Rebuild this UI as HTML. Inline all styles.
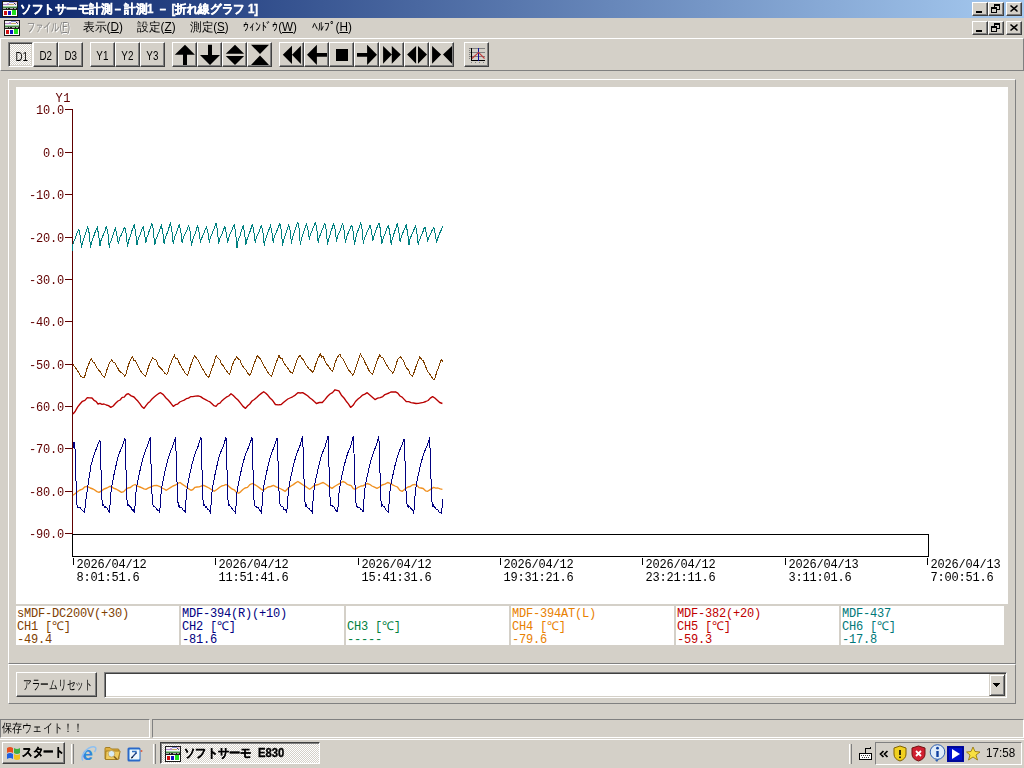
<!DOCTYPE html>
<html><head><meta charset="utf-8">
<style>
*{box-sizing:border-box;margin:0;padding:0}
html,body{width:1024px;height:768px;overflow:hidden;background:#D4D0C8;font-family:"Liberation Sans",sans-serif;font-size:12px;color:#000}
.a{position:absolute}
.btn{position:absolute;background:#D4D0C8;border-top:1px solid #fff;border-left:1px solid #fff;border-right:1px solid #404040;border-bottom:1px solid #404040;box-shadow:inset -1px -1px 0 #808080}
.wbtn{position:absolute;width:16px;height:14px;background:#D4D0C8;border-top:1px solid #fff;border-left:1px solid #fff;border-right:1px solid #404040;border-bottom:1px solid #404040;box-shadow:inset -1px -1px 0 #808080}
.tb{position:absolute;top:42px;width:25px;height:25px;background:#D4D0C8;border-top:1px solid #fff;border-left:1px solid #fff;border-right:1px solid #404040;border-bottom:1px solid #404040;box-shadow:inset -1px -1px 0 #808080;font-size:12px;text-align:center;line-height:22px}
.tt{display:inline-block;transform:scale(0.82,1.1);margin-top:1.5px}
.tb svg{position:absolute;left:0;top:0}
.menu{position:absolute;top:19px;height:17px;line-height:17px;font-size:12px;white-space:nowrap}
.sx{display:inline-block;transform-origin:0 50%;white-space:pre}
.mono{font-family:"Liberation Mono",monospace}
.ylab{position:absolute;transform:scaleY(1.12);font-family:"Liberation Mono",monospace;font-size:12px;color:#600000;line-height:10px;letter-spacing:-0.2px;text-align:right;width:60px}
.xlab{position:absolute;transform:scaleY(1.1);transform-origin:0 0;font-family:"Liberation Mono",monospace;font-size:12px;color:#000;line-height:12.3px;letter-spacing:-0.2px;white-space:pre}
.cell{position:absolute;top:606px;width:163px;height:39px;background:#fff;font-family:"Liberation Mono",monospace;font-size:12px;line-height:13px;padding:2px 0 0 1px;white-space:pre;letter-spacing:-0.2px}
</style></head><body>
<!-- title bar -->
<div class="a" style="left:0;top:0;width:1024px;height:18px;background:linear-gradient(to right,#0A246A,#A6CAF0)"></div>
<svg class="a" style="left:2px;top:1px" width="16" height="16" viewBox="0 0 16 16" shape-rendering="crispEdges">
<rect x="0" y="0" width="16" height="16" fill="#1a1a1a"/>
<rect x="1" y="1" width="14" height="6" fill="#f4f2f8"/>
<rect x="7" y="1" width="5" height="1" fill="#8088d0"/><rect x="12" y="1" width="3" height="2" fill="#e8c8d8"/>
<rect x="5" y="2" width="2" height="1" fill="#c0a0e0"/><rect x="12" y="2" width="1" height="1" fill="#402060"/>
<rect x="1" y="3" width="6" height="1" fill="#b088c8"/><rect x="7" y="3" width="5" height="1" fill="#c8a868"/><rect x="13" y="3" width="1" height="1" fill="#406080"/>
<rect x="1" y="5" width="14" height="1" fill="#a0d0a0"/><rect x="1" y="6" width="14" height="1" fill="#4a8a4a"/>
<path d="M1 7h3v1H1zM5 7h1v1H5zM8 7h3v1H8zM12 7h2v1h-2z" fill="#a8a8a8"/>
<rect x="1" y="9" width="14" height="6" fill="#fff"/>
<rect x="2" y="10" width="3" height="4" fill="#d01010"/>
<rect x="6" y="10" width="3" height="4" fill="#1010c0"/>
<rect x="10" y="9" width="4" height="5" fill="#20e020"/>
</svg>
<div class="a" style="left:20px;top:1px;height:16px;line-height:16px;color:#fff;font-weight:bold;font-size:12px;white-space:nowrap;-webkit-text-stroke:0.35px #fff"><span class="sx" style="transform:scaleX(0.963)">ソフトサーモ計測－計測1 － [折れ線グラフ 1]</span></div>
<div class="wbtn" style="left:972px;top:2px"><svg class="a" width="14" height="12" style="left:0;top:0"><rect x="3" y="8" width="6" height="2" fill="#000"/></svg></div>
<div class="wbtn" style="left:988px;top:2px"><svg class="a" width="14" height="12" style="left:0;top:0" shape-rendering="crispEdges"><path d="M5 1h6v2H5zM10 3h1v4H10zM8 6h3v1H8zM5 3h1v1H5zM2 4h6v2H2zM2 6h1v4H2zM7 6h1v4H7zM2 9h6v1H2z" fill="#000"/></svg></div>
<div class="wbtn" style="left:1006px;top:2px"><svg class="a" width="14" height="12" style="left:0;top:0"><path d="M3.5 2.5l7 6M10.5 2.5l-7 6" stroke="#000" stroke-width="1.6"/></svg></div>
<!-- menu bar -->
<svg class="a" style="left:4px;top:20px" width="16" height="16" viewBox="0 0 16 16" shape-rendering="crispEdges">
<rect x="0" y="0" width="16" height="16" fill="#1a1a1a"/>
<rect x="1" y="1" width="14" height="6" fill="#f4f2f8"/>
<rect x="7" y="1" width="5" height="1" fill="#8088d0"/><rect x="12" y="1" width="3" height="2" fill="#e8c8d8"/>
<rect x="5" y="2" width="2" height="1" fill="#c0a0e0"/><rect x="12" y="2" width="1" height="1" fill="#402060"/>
<rect x="1" y="3" width="6" height="1" fill="#b088c8"/><rect x="7" y="3" width="5" height="1" fill="#c8a868"/><rect x="13" y="3" width="1" height="1" fill="#406080"/>
<rect x="1" y="5" width="14" height="1" fill="#a0d0a0"/><rect x="1" y="6" width="14" height="1" fill="#4a8a4a"/>
<path d="M1 7h3v1H1zM5 7h1v1H5zM8 7h3v1H8zM12 7h2v1h-2z" fill="#a8a8a8"/>
<rect x="1" y="9" width="14" height="6" fill="#fff"/>
<rect x="2" y="10" width="3" height="4" fill="#d01010"/>
<rect x="6" y="10" width="3" height="4" fill="#1010c0"/>
<rect x="10" y="9" width="4" height="5" fill="#20e020"/>
</svg>
<div class="menu" style="left:27px;color:#808080;text-shadow:1px 1px 0 #fff"><span class="sx" style="transform:scaleX(0.68)">ファイル(<u>F</u>)</span></div>
<div class="menu" style="left:83px"><span class="sx" style="transform:scaleX(0.98)">表示(<u>D</u>)</span></div>
<div class="menu" style="left:137px"><span class="sx" style="transform:scaleX(0.98)">設定(<u>Z</u>)</span></div>
<div class="menu" style="left:190px"><span class="sx" style="transform:scaleX(0.965)">測定(<u>S</u>)</span></div>
<div class="menu" style="left:243px"><span class="sx" style="transform:scaleX(0.976)">ｳｨﾝﾄﾞｳ(<u>W</u>)</span></div>
<div class="menu" style="left:312px"><span class="sx" style="transform:scaleX(0.98)">ﾍﾙﾌﾟ(<u>H</u>)</span></div>
<div class="wbtn" style="left:972px;top:21px"><svg class="a" width="14" height="12" style="left:0;top:0"><rect x="3" y="8" width="6" height="2" fill="#000"/></svg></div>
<div class="wbtn" style="left:988px;top:21px"><svg class="a" width="14" height="12" style="left:0;top:0" shape-rendering="crispEdges"><path d="M5 1h6v2H5zM10 3h1v4H10zM8 6h3v1H8zM5 3h1v1H5zM2 4h6v2H2zM2 6h1v4H2zM7 6h1v4H7zM2 9h6v1H2z" fill="#000"/></svg></div>
<div class="wbtn" style="left:1006px;top:21px"><svg class="a" width="14" height="12" style="left:0;top:0"><path d="M3.5 2.5l7 6M10.5 2.5l-7 6" stroke="#000" stroke-width="1.6"/></svg></div>
<!-- toolbar -->
<div class="a" style="left:0;top:38px;width:1024px;height:33px;border-top:1px solid #fff;border-left:1px solid #fff;border-right:1px solid #808080;border-bottom:1px solid #808080"></div>
<div class="tb" style="left:8px;border-top-color:#808080;border-left-color:#808080;border-right-color:#fff;border-bottom-color:#fff;box-shadow:inset 1px 1px 0 #404040,inset -1px -1px 0 #D4D0C8;background-color:#fff;background-image:linear-gradient(45deg,#D4D0C8 25%,transparent 25%,transparent 75%,#D4D0C8 75%),linear-gradient(45deg,#D4D0C8 25%,transparent 25%,transparent 75%,#D4D0C8 75%);background-size:2px 2px;background-position:0 0,1px 1px;padding:1px 0 0 3px"><span class="tt">D1</span></div>
<div class="tb" style="left:33px"><span class="tt">D2</span></div>
<div class="tb" style="left:58px"><span class="tt">D3</span></div>
<div class="tb" style="left:90px"><span class="tt">Y1</span></div>
<div class="tb" style="left:115px"><span class="tt">Y2</span></div>
<div class="tb" style="left:140px"><span class="tt">Y3</span></div>
<div class="tb" style="left:172px"><svg style="position:absolute;left:-1px;top:-1px" width="25" height="25" viewBox="0 0 25 25"><path d="M13 2.8L22.9 12.7H15V22.9H11V12.7H2.8Z" fill="#000"/></svg></div>
<div class="tb" style="left:197px"><svg style="position:absolute;left:-1px;top:-1px" width="25" height="25" viewBox="0 0 25 25"><path d="M11 2.8H15V13H23L13 22.9L3 13H11Z" fill="#000"/></svg></div>
<div class="tb" style="left:222px"><svg style="position:absolute;left:-1px;top:-1px" width="25" height="25" viewBox="0 0 25 25"><path d="M13 2.8L22.1 11.7H3.8Z M3.8 14H22.1L13 22.9Z" fill="#000"/></svg></div>
<div class="tb" style="left:247px"><svg style="position:absolute;left:-1px;top:-1px" width="25" height="25" viewBox="0 0 25 25"><path d="M4 2.8H22L13 12Z M13 13.5L22 23H4Z" fill="#000"/></svg></div>
<div class="tb" style="left:279px"><svg style="position:absolute;left:-1px;top:-1px" width="25" height="25" viewBox="0 0 25 25"><path d="M3.8 12.7L13 3.8V21.9Z M13 12.7L21.9 3.8V21.9Z" fill="#000"/></svg></div>
<div class="tb" style="left:304px"><svg style="position:absolute;left:-1px;top:-1px" width="25" height="25" viewBox="0 0 25 25"><path d="M3 12.7L12.9 2.8V11H23V14.8H12.9V22.9Z" fill="#000"/></svg></div>
<div class="tb" style="left:329px"><svg style="position:absolute;left:-1px;top:-1px" width="25" height="25" viewBox="0 0 25 25"><rect x="7" y="7" width="12" height="12" fill="#000"/></svg></div>
<div class="tb" style="left:354px"><svg style="position:absolute;left:-1px;top:-1px" width="25" height="25" viewBox="0 0 25 25"><path d="M23 12.7L13.1 2.8V11H3V14.8H13.1V22.9Z" fill="#000"/></svg></div>
<div class="tb" style="left:379px"><svg style="position:absolute;left:-1px;top:-1px" width="25" height="25" viewBox="0 0 25 25"><path d="M4.1 3.9L12.8 12.6L4.1 21.8Z M12.8 3.9L21.8 12.6L12.8 21.8Z" fill="#000"/></svg></div>
<div class="tb" style="left:404px"><svg style="position:absolute;left:-1px;top:-1px" width="25" height="25" viewBox="0 0 25 25"><path d="M3.1 12.6L12.1 3.9V21.8Z M14 3.9L23 12.6L14 21.8Z" fill="#000"/></svg></div>
<div class="tb" style="left:429px"><svg style="position:absolute;left:-1px;top:-1px" width="25" height="25" viewBox="0 0 25 25"><path d="M3.1 3.9L12.1 12.6L3.1 21.8Z M23 3.9V21.8L14 12.6Z" fill="#000"/></svg></div>
<div class="tb" style="left:464px"><svg style="position:absolute;left:-1px;top:-1px" width="25" height="25" viewBox="0 0 25 25"><g shape-rendering="crispEdges"><path d="M5 6.5H21M5 10.5H21M5 14.5H21" stroke="#808080"/>
<path d="M5 8.5h1M5 12.5h1M5 16.5h1M7.5 20v1M11.5 20v1M15.5 20v1M19.5 20v1" stroke="#808080"/>
<path d="M7.5 6V19M7 18.5H21" stroke="#000"/><path d="M14.5 6V19" stroke="#1010a0" stroke-width="1.2"/></g>
<path d="M8 16.5L14.6 10.4L20.5 16.5" stroke="#c03838" fill="none" stroke-width="1.1"/></svg></div>
<!-- chart panel -->
<div class="a" style="left:8px;top:79px;width:1008px;height:585px;border-top:1px solid #fff;border-left:1px solid #fff;border-right:1px solid #808080;border-bottom:1px solid #808080"></div>
<div class="a" style="left:16px;top:87px;width:992px;height:517px;background:#fff"></div>
<div class="cell" style="left:16px;color:#804000">sMDF-DC200V(+30)
CH1 [℃]
-49.4</div>
<div class="cell" style="left:181px;color:#000080">MDF-394(R)(+10)
CH2 [℃]
-81.6</div>
<div class="cell" style="left:346px;color:#008040">
CH3 [℃]
-----</div>
<div class="cell" style="left:511px;color:#E88000">MDF-394AT(L)
CH4 [℃]
-79.6</div>
<div class="cell" style="left:676px;color:#C00000">MDF-382(+20)
CH5 [℃]
-59.3</div>
<div class="cell" style="left:841px;color:#007878">MDF-437
CH6 [℃]
-17.8</div>
<div class="ylab" style="left:4px;top:106.0px">10.0</div>
<div class="ylab" style="left:4px;top:149.0px">0.0</div>
<div class="ylab" style="left:4px;top:191.0px">-10.0</div>
<div class="ylab" style="left:4px;top:234.0px">-20.0</div>
<div class="ylab" style="left:4px;top:276.0px">-30.0</div>
<div class="ylab" style="left:4px;top:318.0px">-40.0</div>
<div class="ylab" style="left:4px;top:361.0px">-50.0</div>
<div class="ylab" style="left:4px;top:403.0px">-60.0</div>
<div class="ylab" style="left:4px;top:445.0px">-70.0</div>
<div class="ylab" style="left:4px;top:488.0px">-80.0</div>
<div class="ylab" style="left:4px;top:530.0px">-90.0</div>
<div class="ylab" style="left:10px;top:94px;width:61px;text-align:right;letter-spacing:0.5px">Y1</div>
<div class="xlab" style="left:76.5px;top:558px">2026/04/12
8:01:51.6</div>
<div class="xlab" style="left:218.5px;top:558px">2026/04/12
11:51:41.6</div>
<div class="xlab" style="left:361.5px;top:558px">2026/04/12
15:41:31.6</div>
<div class="xlab" style="left:503.5px;top:558px">2026/04/12
19:31:21.6</div>
<div class="xlab" style="left:645.5px;top:558px">2026/04/12
23:21:11.6</div>
<div class="xlab" style="left:788.5px;top:558px">2026/04/13
3:11:01.6</div>
<div class="xlab" style="left:930.5px;top:558px">2026/04/13
7:00:51.6</div>
<svg class="a" style="left:0;top:0" width="1024" height="768" viewBox="0 0 1024 768">
<g shape-rendering="crispEdges">
<path d="M72.5 109V534" stroke="#600000"/>
<path d="M65 109.5H72" stroke="#600000"/>
<path d="M65 152.5H72" stroke="#600000"/>
<path d="M65 194.5H72" stroke="#600000"/>
<path d="M65 237.5H72" stroke="#600000"/>
<path d="M65 279.5H72" stroke="#600000"/>
<path d="M65 321.5H72" stroke="#600000"/>
<path d="M65 364.5H72" stroke="#600000"/>
<path d="M65 406.5H72" stroke="#600000"/>
<path d="M65 448.5H72" stroke="#600000"/>
<path d="M65 491.5H72" stroke="#600000"/>
<path d="M65 533.5H72" stroke="#600000"/>
<rect x="72.5" y="534.5" width="856" height="22" fill="none" stroke="#000"/>
<path d="M73.5 557.5V565" stroke="#000"/>
<path d="M215.5 557.5V565" stroke="#000"/>
<path d="M358.5 557.5V565" stroke="#000"/>
<path d="M500.5 557.5V565" stroke="#000"/>
<path d="M642.5 557.5V565" stroke="#000"/>
<path d="M785.5 557.5V565" stroke="#000"/>
<path d="M927.5 557.5V565" stroke="#000"/>
</g>
<path d="M72.5,251.0 L73.0,244.0 L74.5,240.0 L76.0,236.0 L77.5,232.0 L78.9,229.7 L79.7,233.7 L80.2,235.7 L81.3,245.0 L81.7,248.0 L82.3,243.1 L83.5,239.1 L84.8,235.9 L86.0,231.7 L87.2,228.4 L87.8,226.9 L88.6,230.9 L89.1,232.9 L90.2,244.5 L90.6,247.5 L91.3,242.9 L92.6,238.9 L93.9,235.9 L95.2,231.9 L96.5,228.7 L97.2,227.4 L98.0,231.4 L98.5,233.4 L99.6,243.1 L100.0,246.1 L100.7,241.4 L102.0,237.9 L103.3,234.9 L104.6,232.1 L105.9,227.8 L106.6,226.9 L107.4,230.9 L107.9,232.9 L109.0,245.0 L109.4,248.0 L110.0,243.3 L111.2,240.3 L112.4,237.1 L113.7,233.3 L114.9,229.6 L115.5,228.3 L116.3,232.3 L116.8,234.3 L117.9,240.8 L118.3,243.8 L119.0,240.8 L120.2,236.7 L121.5,234.7 L122.8,231.2 L124.1,228.1 L124.8,227.4 L125.6,231.4 L126.1,233.4 L127.2,244.0 L127.6,247.0 L128.3,241.6 L129.6,237.8 L130.9,234.4 L132.2,229.8 L133.5,226.3 L134.2,224.6 L135.0,228.6 L135.5,230.6 L136.6,242.2 L137.0,245.2 L137.6,241.3 L138.8,237.7 L140.1,234.6 L141.3,231.0 L142.5,227.7 L143.1,226.9 L143.9,230.9 L144.4,232.9 L145.5,240.3 L145.9,243.3 L146.5,238.6 L147.7,235.6 L148.9,231.8 L150.2,228.3 L151.4,225.1 L152.0,223.6 L152.8,227.6 L153.3,229.6 L154.4,242.2 L154.8,245.2 L155.5,240.8 L156.8,237.1 L158.1,234.1 L159.4,230.7 L160.7,226.6 L161.4,225.5 L162.2,229.5 L162.7,231.5 L163.8,241.0 L164.2,244.0 L164.8,239.6 L166.1,235.8 L167.4,232.5 L168.6,228.8 L169.9,224.6 L170.5,223.4 L171.3,227.4 L171.8,229.4 L172.9,241.0 L173.3,244.0 L173.9,240.4 L175.1,235.9 L176.4,232.8 L177.6,229.9 L178.8,225.7 L179.4,224.8 L180.2,228.8 L180.7,230.8 L181.8,240.0 L182.2,243.0 L182.9,239.2 L184.2,235.5 L185.5,233.2 L186.8,230.3 L188.1,227.0 L188.8,225.7 L189.6,229.7 L190.1,231.7 L191.2,243.3 L191.6,246.3 L192.2,242.2 L193.4,237.8 L194.7,234.6 L195.9,231.0 L197.1,227.2 L197.7,225.7 L198.5,229.7 L199.0,231.7 L200.1,240.0 L200.5,243.0 L201.1,239.4 L202.3,236.9 L203.6,234.1 L204.8,230.7 L206.0,228.0 L206.6,226.7 L207.4,230.7 L207.9,232.7 L209.0,240.0 L209.4,243.0 L210.1,238.2 L211.4,235.4 L212.7,231.8 L214.0,228.9 L215.3,225.2 L216.0,223.4 L216.8,227.4 L217.3,229.4 L218.4,241.0 L218.8,244.0 L219.4,239.9 L220.6,236.9 L221.9,234.2 L223.1,230.5 L224.3,227.9 L224.9,226.7 L225.7,230.7 L226.2,232.7 L227.3,240.0 L227.7,243.0 L228.4,238.6 L229.7,235.3 L230.9,231.9 L232.2,229.7 L233.5,225.6 L234.2,224.8 L235.0,228.8 L235.5,230.8 L236.6,244.7 L237.0,247.7 L237.6,242.6 L238.8,238.8 L240.1,235.4 L241.3,230.7 L242.5,227.2 L243.1,225.7 L243.9,229.7 L244.4,231.7 L245.5,241.9 L245.9,244.9 L246.6,240.5 L247.9,237.3 L249.2,233.6 L250.5,230.3 L251.8,225.9 L252.5,224.8 L253.3,228.8 L253.8,230.8 L254.9,240.0 L255.3,243.0 L255.9,239.0 L257.2,235.8 L258.5,233.3 L259.7,230.4 L261.0,226.3 L261.6,225.5 L262.4,229.5 L262.9,231.5 L264.0,242.6 L264.4,245.6 L265.0,240.8 L266.2,237.2 L267.5,233.6 L268.7,230.5 L269.9,227.0 L270.5,225.5 L271.3,229.5 L271.8,231.5 L272.9,239.8 L273.3,242.8 L274.0,238.3 L275.3,234.5 L276.6,231.6 L277.9,228.2 L279.2,225.0 L279.9,223.6 L280.7,227.6 L281.2,229.6 L282.3,242.6 L282.7,245.6 L283.3,241.5 L284.5,237.4 L285.8,233.4 L287.0,229.9 L288.2,226.2 L288.8,224.5 L289.6,228.5 L290.1,230.5 L291.2,240.7 L291.6,243.7 L292.2,238.3 L293.4,235.4 L294.6,231.3 L295.9,227.6 L297.1,223.6 L297.7,221.7 L298.5,225.7 L299.0,227.7 L300.1,241.7 L300.5,244.7 L301.1,239.9 L302.3,236.1 L303.6,232.0 L304.8,229.0 L306.0,224.6 L306.6,223.6 L307.4,227.6 L307.9,229.6 L309.0,237.0 L309.4,240.0 L310.0,235.7 L311.2,232.7 L312.5,229.6 L313.7,226.8 L314.9,223.4 L315.5,222.7 L316.3,226.7 L316.8,228.7 L317.9,239.8 L318.3,242.8 L319.0,238.0 L320.3,234.7 L321.6,231.2 L322.9,228.2 L324.2,224.4 L324.9,223.6 L325.7,227.6 L326.2,229.6 L327.3,241.7 L327.7,244.7 L328.3,240.5 L329.5,236.4 L330.8,232.0 L332.0,228.6 L333.2,224.9 L333.8,223.6 L334.6,227.6 L335.1,229.6 L336.2,238.9 L336.6,241.9 L337.2,237.7 L338.4,234.1 L339.6,231.7 L340.9,228.8 L342.1,224.8 L342.7,223.6 L343.5,227.6 L344.0,229.6 L345.1,239.8 L345.5,242.8 L346.1,238.9 L347.4,235.2 L348.6,232.0 L349.9,229.3 L351.2,226.0 L351.8,225.0 L352.6,229.0 L353.1,231.0 L354.2,241.7 L354.6,244.7 L355.2,240.3 L356.4,235.5 L357.6,231.4 L358.9,228.7 L360.1,224.3 L360.7,222.7 L361.5,226.7 L362.0,228.7 L363.1,240.7 L363.5,243.7 L364.2,239.2 L365.5,236.3 L366.8,232.3 L368.1,229.7 L369.4,226.9 L370.1,225.0 L370.9,229.0 L371.4,231.0 L372.5,237.9 L372.9,240.9 L373.5,237.3 L374.7,233.9 L376.0,230.1 L377.2,227.1 L378.4,223.6 L379.0,222.7 L379.8,226.7 L380.3,228.7 L381.4,240.7 L381.8,243.7 L382.5,240.0 L383.8,236.5 L385.1,233.5 L386.4,229.8 L387.7,226.4 L388.4,225.5 L389.2,229.5 L389.7,231.5 L390.8,241.7 L391.2,244.7 L391.8,240.4 L393.0,236.8 L394.2,232.9 L395.5,229.2 L396.7,225.5 L397.3,223.6 L398.1,227.6 L398.6,229.6 L399.7,238.9 L400.1,241.9 L400.7,238.6 L401.9,235.0 L403.1,232.4 L404.4,229.4 L405.6,226.1 L406.2,225.5 L407.0,229.5 L407.5,231.5 L408.6,241.7 L409.0,244.7 L409.6,239.9 L410.9,236.8 L412.2,233.3 L413.6,230.5 L414.9,227.4 L415.5,225.5 L416.3,229.5 L416.8,231.5 L417.9,241.7 L418.3,244.7 L419.0,240.7 L420.3,238.1 L421.6,235.0 L422.9,231.9 L424.2,228.0 L424.9,226.9 L425.7,230.9 L426.2,232.9 L427.3,238.9 L427.7,241.9 L428.3,238.4 L429.5,235.7 L430.8,233.1 L432.0,230.6 L433.2,228.5 L433.8,227.3 L434.6,231.3 L435.1,233.3 L436.2,239.8 L436.6,242.8 L437.2,239.7 L438.4,236.6 L439.6,233.3 L440.9,230.7 L442.1,227.9 L442.7,226.4" fill="none" stroke="#008080" stroke-width="1" shape-rendering="crispEdges"/>
<path d="M73.0,364.5 L75.0,367.0 L77.0,370.0 L79.0,373.0 L81.0,376.5 L83.7,378.0 L84.9,376.0 L86.7,369.3 L88.7,364.3 L91.2,358.5 L92.8,361.9 L94.5,362.7 L96.4,367.3 L98.4,369.6 L100.3,371.9 L102.3,375.7 L104.2,377.1 L105.4,375.1 L107.2,368.8 L109.2,363.6 L111.8,359.5 L113.3,362.7 L115.0,362.7 L117.0,366.8 L118.9,370.2 L120.8,372.3 L122.8,373.9 L124.7,376.1 L125.9,374.1 L127.7,367.5 L129.7,361.5 L132.3,356.6 L133.8,360.2 L135.5,361.0 L137.5,364.8 L139.4,368.8 L141.3,372.0 L143.3,374.4 L145.2,376.1 L146.4,374.1 L148.2,367.9 L150.2,362.2 L152.8,357.6 L154.5,359.5 L156.3,360.1 L158.4,365.8 L160.4,367.8 L162.5,370.1 L164.6,373.2 L166.7,374.2 L167.9,372.2 L169.7,366.1 L171.7,360.8 L174.3,355.2 L175.8,358.7 L177.5,358.7 L179.5,363.8 L181.4,366.9 L183.3,369.8 L185.3,373.3 L187.2,375.2 L188.4,373.2 L190.2,366.8 L192.2,361.1 L194.8,355.6 L196.5,358.2 L198.3,360.6 L200.3,365.0 L202.4,368.4 L204.5,371.9 L206.6,375.6 L208.7,377.1 L209.8,375.1 L211.7,369.0 L213.7,363.8 L216.2,355.2 L217.8,358.1 L219.5,359.1 L221.4,363.8 L223.4,365.8 L225.3,369.4 L227.3,371.8 L229.2,374.2 L230.4,372.2 L232.2,365.4 L234.2,360.7 L236.8,356.6 L238.4,358.9 L240.1,360.3 L242.0,365.3 L244.0,367.9 L246.0,370.3 L247.9,373.4 L249.9,375.2 L251.1,373.2 L252.9,367.3 L254.9,361.7 L257.5,355.4 L259.2,357.9 L260.9,359.6 L263.0,364.3 L265.1,367.5 L267.2,371.4 L269.2,374.0 L271.3,376.1 L272.5,374.1 L274.3,368.2 L276.3,362.5 L278.9,355.2 L280.5,358.6 L282.2,358.7 L284.2,363.5 L286.2,366.0 L288.2,368.7 L290.2,371.7 L292.2,373.2 L293.4,371.2 L295.2,365.1 L297.2,359.3 L299.8,355.2 L301.3,357.7 L303.0,359.3 L305.0,363.2 L306.9,366.0 L308.8,368.7 L310.8,370.1 L312.7,372.2 L313.9,370.2 L315.7,364.3 L317.7,358.9 L320.3,354.0 L321.7,357.1 L323.3,356.9 L325.1,361.2 L326.8,364.3 L328.6,366.3 L330.4,369.1 L332.2,371.2 L333.4,369.2 L335.2,362.6 L337.2,357.5 L339.8,354.0 L341.4,357.6 L343.1,358.9 L345.0,363.0 L346.9,367.1 L348.9,370.2 L350.8,372.5 L352.8,375.2 L354.0,373.2 L355.8,367.8 L357.8,361.9 L360.4,354.0 L361.8,356.6 L363.4,358.8 L365.2,362.9 L366.9,366.1 L368.7,369.9 L370.5,372.7 L372.3,374.2 L373.5,372.2 L375.3,365.7 L377.3,360.1 L379.9,354.6 L381.4,357.4 L383.1,358.1 L385.1,362.5 L387.0,365.5 L388.9,368.9 L390.9,370.6 L392.8,373.2 L394.0,371.2 L395.8,365.3 L397.8,359.1 L400.4,356.6 L401.8,358.8 L403.4,360.2 L405.2,365.6 L406.9,368.3 L408.7,370.5 L410.5,374.9 L412.3,376.1 L413.5,374.1 L415.3,368.6 L417.3,362.9 L419.9,356.6 L421.6,359.5 L423.4,360.9 L425.5,366.4 L427.5,371.1 L429.6,373.8 L431.7,377.1 L433.8,380.0 L435.0,378.0 L436.8,371.9 L438.8,366.7 L441.4,359.5 L442.0,360.5 L443.0,361.5" fill="none" stroke="#804000" stroke-width="1" shape-rendering="crispEdges"/>
<path d="M73.0,414.0 L75.3,411.2 L77.7,406.9 L80.0,404.0 L82.4,401.3 L84.9,400.4 L87.3,397.6 L89.7,397.9 L92.0,398.0 L94.0,400.3 L96.0,401.3 L98.0,404.0 L100.0,403.3 L102.0,404.3 L104.0,404.0 L106.3,405.0 L108.5,405.6 L110.8,407.4 L113.2,406.0 L115.6,403.3 L118.0,401.0 L120.1,400.0 L122.2,397.4 L124.2,397.2 L126.3,394.5 L128.4,393.7 L131.2,395.9 L134.0,397.0 L136.0,399.2 L138.0,401.3 L140.0,403.9 L142.0,406.8 L144.0,408.4 L146.0,405.7 L148.0,403.1 L150.0,401.4 L152.0,399.0 L154.2,397.0 L156.3,395.2 L158.4,393.7 L160.6,392.7 L163.3,394.6 L166.0,398.0 L168.4,400.3 L170.9,403.3 L173.3,406.4 L175.5,404.7 L177.7,404.1 L179.8,402.0 L182.0,401.0 L184.2,400.1 L186.3,398.7 L188.5,398.1 L190.6,396.7 L192.8,396.6 L195.4,396.2 L198.0,395.8 L200.6,396.6 L203.1,398.4 L205.5,399.6 L208.0,401.0 L210.0,401.9 L212.0,403.7 L214.0,405.7 L216.0,406.4 L218.0,403.9 L220.0,403.2 L222.0,400.7 L224.0,399.0 L226.3,397.2 L228.7,396.0 L231.0,393.7 L233.3,395.6 L235.7,397.9 L238.0,400.0 L240.5,403.1 L243.0,406.4 L245.5,408.4 L247.7,405.7 L249.8,404.0 L252.0,401.0 L254.3,399.5 L256.7,397.5 L259.0,395.3 L261.4,393.4 L263.7,391.8 L265.8,393.2 L267.9,395.3 L270.0,398.0 L272.7,400.6 L275.4,404.5 L278.3,404.9 L281.2,404.5 L283.4,402.5 L285.6,400.7 L287.8,399.0 L290.0,398.0 L292.6,396.8 L295.3,395.1 L297.9,392.7 L300.3,393.0 L302.7,392.7 L305.1,394.1 L307.6,395.8 L310.0,398.0 L312.1,399.5 L314.3,401.6 L316.4,403.5 L319.4,402.5 L322.3,402.5 L324.9,399.6 L327.4,396.5 L330.0,394.0 L332.5,392.6 L335.0,389.8 L338.9,390.8 L341.4,395.2 L344.0,398.0 L346.2,401.2 L348.4,403.9 L350.6,407.4 L353.1,405.3 L355.5,401.5 L358.0,399.0 L360.3,397.2 L362.6,395.1 L364.9,394.1 L367.2,392.7 L369.8,395.0 L372.4,397.3 L375.0,399.6 L377.6,398.1 L380.2,397.6 L382.8,396.6 L384.9,394.6 L386.9,393.8 L389.0,393.0 L391.2,391.9 L393.3,392.0 L395.5,391.8 L397.8,393.2 L400.0,396.0 L402.1,397.1 L404.2,399.4 L406.2,401.5 L408.7,401.6 L411.1,402.6 L413.6,403.0 L416.0,403.5 L418.4,403.4 L420.9,402.8 L423.4,402.3 L425.8,401.5 L428.1,400.5 L430.3,398.1 L432.6,396.6 L434.8,398.0 L437.0,400.0 L439.7,402.5 L442.4,403.5" fill="none" stroke="#B80000" stroke-width="1.35" stroke-linejoin="round"/>
<path d="M73.0,495.2 L75.3,493.5 L77.7,491.5 L80.0,490.0 L82.4,489.2 L84.9,486.8 L87.3,486.4 L90.2,488.0 L93.0,489.0 L95.0,490.2 L97.0,491.6 L99.0,492.3 L101.5,490.9 L104.0,489.0 L106.9,488.0 L109.8,486.4 L111.9,486.7 L113.9,488.4 L116.0,489.0 L118.8,490.7 L121.5,492.3 L123.7,491.6 L125.8,489.4 L128.0,488.0 L130.4,487.5 L132.8,485.5 L135.2,484.5 L137.6,486.1 L140.0,487.0 L142.0,487.8 L144.0,488.9 L146.0,489.3 L148.5,487.9 L151.0,487.0 L153.8,485.7 L156.7,485.4 L159.3,486.3 L162.0,488.0 L164.2,489.0 L166.4,490.3 L168.6,488.8 L170.8,487.4 L173.0,486.0 L175.3,485.2 L177.7,483.5 L180.0,482.5 L182.5,484.4 L185.0,486.0 L187.9,488.3 L190.9,490.3 L192.9,489.5 L195.0,487.3 L197.0,487.0 L199.2,486.9 L201.4,486.0 L203.6,485.4 L206.3,486.7 L209.0,488.0 L211.7,489.7 L214.3,491.3 L217.2,489.3 L220.0,487.0 L222.0,485.9 L224.0,485.4 L226.0,484.5 L228.0,485.4 L230.0,487.4 L232.0,489.0 L234.2,489.8 L236.5,492.4 L238.7,493.2 L240.8,491.6 L242.9,489.5 L245.0,488.0 L247.5,487.4 L249.9,484.6 L252.4,483.5 L254.7,484.6 L257.0,486.0 L259.9,488.1 L262.7,490.3 L265.4,488.8 L268.0,487.0 L270.7,486.5 L273.4,485.4 L276.2,486.8 L279.0,488.0 L281.1,489.0 L283.1,490.1 L285.2,491.3 L288.1,488.3 L291.0,486.0 L293.3,484.6 L295.6,482.9 L297.9,481.5 L300.4,483.1 L303.0,485.0 L305.2,486.1 L307.4,487.7 L309.6,489.3 L311.7,487.8 L313.9,485.8 L316.0,485.0 L318.4,484.5 L320.8,483.3 L323.2,482.5 L327.0,485.0 L329.5,486.9 L332.0,488.4 L334.5,486.5 L337.0,485.0 L339.9,483.3 L342.8,481.5 L344.9,482.3 L346.9,484.1 L349.0,485.0 L351.2,485.7 L353.3,488.6 L355.5,489.3 L358.2,487.3 L361.0,486.0 L363.1,485.9 L365.1,484.6 L367.2,483.5 L369.6,484.3 L372.0,486.0 L374.5,487.2 L377.0,488.4 L379.5,487.0 L382.0,485.0 L384.9,484.2 L387.7,482.5 L390.1,483.3 L392.6,484.9 L395.0,486.0 L397.4,487.0 L399.9,490.4 L402.3,491.3 L405.1,488.9 L408.0,487.0 L410.3,486.5 L412.7,484.8 L415.0,484.5 L417.0,485.4 L419.0,487.6 L421.0,488.0 L423.2,488.5 L425.5,490.8 L427.7,491.3 L430.6,489.4 L433.6,487.4 L435.8,488.1 L438.0,488.0 L440.2,488.9 L442.4,489.3" fill="none" stroke="#F09020" stroke-width="1.35" stroke-linejoin="round"/>
<path d="M73.0,448.0 L73.0,442.0 L74.0,442.0 L74.0,448.0 L75.0,449.0 L75.5,470.0 L76.5,491.0 L77.0,505.0 L77.5,507.0 L80.0,507.4 L82.0,510.0 L84.5,512.6 L85.5,503.0 L86.5,496.0 L88.0,485.0 L91.0,465.0 L94.0,455.0 L97.6,445.0 L100.0,440.5 L101.0,470.0 L102.0,500.0 L103.0,506.0 L103.6,505.0 L104.5,507.8 L105.5,507.0 L106.5,507.5 L107.5,509.0 L108.5,511.0 L109.5,512.4 L110.2,503.0 L111.0,492.0 L112.0,485.0 L113.9,475.0 L115.9,466.0 L117.8,458.0 L119.8,452.0 L122.3,446.0 L125.0,438.2 L126.0,470.0 L127.0,500.0 L128.0,506.0 L128.6,505.1 L129.5,506.3 L130.5,506.7 L131.5,508.1 L132.5,510.7 L133.5,510.0 L134.5,513.0 L135.2,503.0 L136.0,492.0 L137.0,485.0 L139.0,475.0 L141.0,466.0 L142.9,458.0 L144.9,452.0 L147.4,446.0 L150.2,437.5 L151.2,470.0 L152.2,500.0 L153.2,506.0 L153.8,506.2 L154.7,506.2 L155.7,507.9 L156.7,508.9 L157.7,510.8 L158.7,510.6 L159.7,512.2 L160.4,503.0 L161.2,492.0 L162.2,485.0 L164.2,475.0 L166.2,466.0 L168.3,458.0 L170.3,452.0 L172.8,446.0 L175.6,437.0 L176.6,470.0 L177.6,500.0 L178.6,506.0 L179.2,505.3 L180.1,508.0 L181.1,507.2 L182.1,508.2 L183.1,509.9 L184.1,510.6 L185.1,511.6 L185.8,503.0 L186.6,492.0 L187.6,485.0 L189.6,475.0 L191.6,466.0 L193.7,458.0 L195.7,452.0 L198.2,446.0 L201.0,437.0 L202.0,470.0 L203.0,500.0 L204.0,506.0 L204.6,504.7 L205.5,507.7 L206.5,506.6 L207.5,509.4 L208.5,509.5 L209.5,510.5 L210.5,512.5 L211.2,503.0 L212.0,492.0 L213.0,485.0 L214.9,475.0 L216.9,466.0 L218.8,458.0 L220.8,452.0 L223.3,446.0 L226.0,437.5 L227.0,470.0 L228.0,500.0 L229.0,506.0 L229.6,504.9 L230.5,506.7 L231.5,507.9 L232.5,509.3 L233.5,510.6 L234.5,511.3 L235.5,513.3 L236.2,503.0 L237.0,492.0 L238.1,485.0 L240.2,475.0 L242.3,466.0 L244.4,458.0 L246.5,452.0 L249.1,446.0 L252.0,437.6 L253.0,470.0 L254.0,500.0 L255.0,506.0 L255.6,506.4 L256.5,507.1 L257.5,507.4 L258.5,507.6 L259.5,510.5 L260.5,510.9 L261.5,513.0 L262.2,503.0 L263.0,492.0 L264.0,485.0 L266.0,475.0 L268.0,466.0 L270.0,458.0 L272.0,452.0 L274.5,446.0 L277.3,437.6 L278.3,470.0 L279.3,500.0 L280.3,506.0 L280.9,505.8 L281.8,506.6 L282.8,506.1 L283.8,509.4 L284.8,509.3 L285.8,510.9 L286.8,512.2 L287.5,503.0 L288.3,492.0 L289.3,485.0 L291.3,475.0 L293.3,466.0 L295.4,458.0 L297.4,452.0 L299.9,446.0 L302.7,435.6 L303.7,470.0 L304.7,500.0 L305.7,506.0 L306.3,505.1 L307.2,507.5 L308.2,508.0 L309.2,508.0 L310.2,510.3 L311.2,510.6 L312.2,512.6 L312.9,503.0 L313.7,492.0 L314.7,485.0 L316.7,475.0 L318.7,466.0 L320.8,458.0 L322.8,452.0 L325.3,446.0 L328.1,435.6 L329.1,470.0 L330.1,500.0 L331.1,506.0 L331.7,505.3 L332.6,506.3 L333.6,506.3 L334.6,507.9 L335.6,510.8 L336.6,511.0 L337.6,511.9 L338.3,503.0 L339.1,492.0 L340.1,485.0 L342.1,475.0 L344.1,466.0 L346.2,458.0 L348.2,452.0 L350.7,446.0 L353.5,435.6 L354.5,470.0 L355.5,500.0 L356.5,506.0 L357.1,506.3 L358.0,508.0 L359.0,506.9 L360.0,507.8 L361.0,509.4 L362.0,510.2 L363.0,512.2 L363.7,503.0 L364.5,492.0 L365.5,485.0 L367.5,475.0 L369.5,466.0 L371.6,458.0 L373.6,452.0 L376.1,446.0 L378.9,436.6 L379.9,470.0 L380.9,500.0 L381.9,506.0 L382.5,504.7 L383.4,506.5 L384.4,506.5 L385.4,508.6 L386.4,510.8 L387.4,511.5 L388.4,512.3 L389.1,503.0 L389.9,492.0 L390.9,485.0 L392.9,475.0 L394.9,466.0 L397.0,458.0 L399.0,452.0 L401.5,446.0 L404.3,438.6 L405.3,470.0 L406.3,500.0 L407.3,506.0 L407.9,505.3 L408.8,507.0 L409.8,506.8 L410.8,508.2 L411.8,509.1 L412.8,510.6 L413.8,513.4 L414.5,503.0 L415.3,492.0 L416.3,485.0 L418.3,475.0 L420.3,466.0 L422.4,458.0 L424.4,452.0 L426.9,446.0 L429.7,437.6 L430.7,470.0 L431.7,500.0 L432.7,506.0 L433.3,504.8 L434.2,507.0 L435.2,507.3 L436.2,509.2 L437.2,509.4 L438.2,510.5 L439.2,512.0 L441.5,513.0 L443.0,499.0" fill="none" stroke="#000080" stroke-width="1" shape-rendering="crispEdges"/>
</svg>
<!-- alarm panel -->
<div class="a" style="left:8px;top:664px;width:1008px;height:40px;border-top:1px solid #fff;border-left:1px solid #fff;border-right:1px solid #808080;border-bottom:1px solid #808080"></div>
<div class="btn" style="left:16px;top:672px;width:81px;height:25px;text-align:center;line-height:23px;font-size:13px;white-space:nowrap;text-align:left;padding-left:6px"><span class="sx" style="transform:scaleX(0.67)">アラームリセット</span></div>
<div class="a" style="left:104px;top:672px;width:903px;height:26px;background:#fff;border-top:1px solid #808080;border-left:1px solid #808080;border-right:1px solid #fff;border-bottom:1px solid #fff;box-shadow:inset 1px 1px 0 #404040,inset -1px -1px 0 #D4D0C8"></div>
<div class="a" style="left:989px;top:674px;width:16px;height:22px;background:#D4D0C8;border-top:1px solid #D4D0C8;border-left:1px solid #D4D0C8;border-right:1px solid #404040;border-bottom:1px solid #404040;box-shadow:inset 1px 1px 0 #fff,inset -1px -1px 0 #808080"><svg class="a" width="16" height="22" style="left:-1px;top:-1px" shape-rendering="crispEdges"><path d="M4 9h7v1H4zM5 10h5v1H5zM6 11h3v1H6zM7 12h1v1H7z" fill="#000"/></svg></div>
<!-- status bar -->
<div class="a" style="left:0;top:719px;width:150px;height:19px;border-top:1px solid #808080;border-left:1px solid #808080;border-right:1px solid #fff;border-bottom:1px solid #fff"></div>
<div class="a" style="left:152px;top:719px;width:872px;height:19px;border-top:1px solid #808080;border-left:1px solid #808080;border-right:1px solid #fff;border-bottom:1px solid #fff"></div>
<div class="a" style="left:2px;top:720px;height:17px;line-height:17px;font-size:12px;white-space:nowrap"><span class="sx" style="transform:scaleX(0.845)">保存ウェイト！！</span></div>
<!-- taskbar -->
<div class="a" style="left:0;top:739px;width:1024px;height:29px;background:#D4D0C8;border-top:1px solid #fff"></div>
<div class="btn" style="left:2px;top:742px;width:63px;height:22px"></div>
<svg class="a" style="left:5px;top:745px" width="18" height="16" viewBox="0 0 18 16">
<path d="M2 3Q5 1 8 3V8Q5 6 2 8Z" fill="#e85020"/><path d="M9 3Q12 5 15 3V8Q12 10 9 8Z" fill="#40b040"/>
<path d="M2 9Q5 7 8 9V14Q5 12 2 14Z" fill="#2060e0"/><path d="M9 9Q12 11 15 9V14Q12 16 9 14Z" fill="#f0c020"/></svg>
<div class="a" style="left:22px;top:742px;height:20px;line-height:20px;font-weight:bold;font-size:12px;white-space:nowrap;-webkit-text-stroke:0.35px #000"><span class="sx" style="transform:scaleX(0.88)">スタート</span></div>
<div class="a" style="left:71px;top:744px;width:3px;height:20px;border-left:1px solid #fff;border-right:1px solid #808080"></div>
<div class="a" style="left:153px;top:744px;width:3px;height:20px;border-left:1px solid #fff;border-right:1px solid #808080"></div>
<div class="a" style="left:849px;top:744px;width:3px;height:20px;border-left:1px solid #fff;border-right:1px solid #808080"></div>
<svg class="a" style="left:80px;top:745px" width="17" height="17" viewBox="0 0 17 17">
<text x="2.2" y="14.6" font-family="Liberation Sans" font-weight="bold" font-size="19" fill="#2f86dc">e</text>
<path d="M3 15.5C0.5 13 3.5 6 9 3C12 1.5 14.5 1.5 15.5 2.5C16.3 3.5 15.5 5.5 14.5 7" stroke="#8ec0f0" stroke-width="1.5" fill="none"/>
</svg>
<svg class="a" style="left:104px;top:746px" width="17" height="15" viewBox="0 0 17 15">
<path d="M1 2.5Q1 1.5 2 1.5H6L7.5 3H14Q15 3 15 4V13H1Z" fill="#e0b040" stroke="#a07818" stroke-width="0.9"/>
<path d="M2 5H15.5Q16.5 5 16 6L14 13.5H1.5Z" fill="#f0cc60" stroke="#a07818" stroke-width="0.9"/>
<circle cx="7.5" cy="7.8" r="3.3" fill="#d8ecf4" stroke="#c0a050" stroke-width="0.8"/>
<path d="M10 10.5L13 13.5" stroke="#806020" stroke-width="1.6"/>
</svg>
<svg class="a" style="left:127px;top:746px" width="16" height="16" viewBox="0 0 16 16">
<rect x="0.5" y="1.5" width="13" height="14" rx="1.5" fill="#2a68c8"/>
<rect x="2.5" y="3.5" width="10" height="10" rx="1" fill="#eef6fc" stroke="#88b8e8"/>
<path d="M5 5.5H9V8" stroke="#3070c0" stroke-width="1.3" fill="none"/><path d="M4.5 12L9.5 6.5" stroke="#204080" stroke-width="1.2"/>
<path d="M5 10.5L4 12.5L6 11.8Z" fill="#000"/><circle cx="14.5" cy="5" r="1" fill="#e06040"/>
</svg>
<div class="a" style="left:160px;top:742px;width:160px;height:22px;border-top:1px solid #404040;border-left:1px solid #404040;border-right:1px solid #fff;border-bottom:1px solid #fff;box-shadow:inset 1px 1px 0 #808080;background-color:#fff;background-image:linear-gradient(45deg,#D4D0C8 25%,transparent 25%,transparent 75%,#D4D0C8 75%),linear-gradient(45deg,#D4D0C8 25%,transparent 25%,transparent 75%,#D4D0C8 75%);background-size:2px 2px;background-position:0 0,1px 1px"></div>
<svg class="a" style="left:165px;top:746px" width="16" height="16" viewBox="0 0 16 16" shape-rendering="crispEdges">
<rect x="0" y="0" width="16" height="16" fill="#1a1a1a"/>
<rect x="1" y="1" width="14" height="6" fill="#f4f2f8"/>
<rect x="7" y="1" width="5" height="1" fill="#8088d0"/><rect x="12" y="1" width="3" height="2" fill="#e8c8d8"/>
<rect x="5" y="2" width="2" height="1" fill="#c0a0e0"/><rect x="12" y="2" width="1" height="1" fill="#402060"/>
<rect x="1" y="3" width="6" height="1" fill="#b088c8"/><rect x="7" y="3" width="5" height="1" fill="#c8a868"/><rect x="13" y="3" width="1" height="1" fill="#406080"/>
<rect x="1" y="5" width="14" height="1" fill="#a0d0a0"/><rect x="1" y="6" width="14" height="1" fill="#4a8a4a"/>
<path d="M1 7h3v1H1zM5 7h1v1H5zM8 7h3v1H8zM12 7h2v1h-2z" fill="#a8a8a8"/>
<rect x="1" y="9" width="14" height="6" fill="#fff"/>
<rect x="2" y="10" width="3" height="4" fill="#d01010"/>
<rect x="6" y="10" width="3" height="4" fill="#1010c0"/>
<rect x="10" y="9" width="4" height="5" fill="#20e020"/>
</svg>
<div class="a" style="left:184px;top:743px;height:20px;line-height:20px;font-weight:bold;font-size:12px;white-space:pre;-webkit-text-stroke:0.35px #000"><span class="sx" style="transform:scaleX(0.94)">ソフトサーモ  E830</span></div>
<div class="a" style="left:875px;top:742px;width:147px;height:23px;border-top:1px solid #808080;border-left:1px solid #808080;border-right:1px solid #fff;border-bottom:1px solid #fff"></div>
<svg class="a" style="left:859px;top:747px" width="14" height="14" viewBox="0 0 14 14" shape-rendering="crispEdges">
<path d="M0 6h13v1H0zM0 12h13v1H0zM0 6h1v7H0zM12 6h1v7h-1z" fill="#000"/><rect x="1" y="7" width="11" height="5" fill="#fff"/>
<path d="M2 8h1v1H2zM4 8h1v1H4zM6 8h1v1H6zM8 8h1v1H8zM10 8h1v1h-1zM3 10h1v1H3zM5 10h1v1H5zM7 10h1v1H7zM9 10h1v1H9z" fill="#404040"/>
<path d="M6 1h1v5H6zM7 1h5v1H7zM11 0h1v1h-1z" fill="#000"/></svg>
<svg class="a" style="left:879px;top:750px" width="10" height="8" viewBox="0 0 10 8"><path d="M4.5 1L1.5 4L4.5 7M8.5 1L5.5 4L8.5 7" stroke="#000" stroke-width="1.7" fill="none"/></svg>
<svg class="a" style="left:893px;top:745px" width="14" height="17" viewBox="0 0 14 17">
<path d="M7 1L13 3V9Q13 14 7 16Q1 14 1 9V3Z" fill="#f0d020" stroke="#806000"/><path d="M7 5V10" stroke="#000" stroke-width="1.6"/><rect x="6.2" y="11.5" width="1.6" height="1.6" fill="#000"/></svg>
<svg class="a" style="left:911px;top:745px" width="15" height="17" viewBox="0 0 15 17">
<path d="M7.5 1L14 3V9Q14 14 7.5 16Q1 14 1 9V3Z" fill="#d02030" stroke="#701010"/><path d="M5 6L10 11M10 6L5 11" stroke="#fff" stroke-width="1.8"/></svg>
<svg class="a" style="left:929px;top:744px" width="17" height="19" viewBox="0 0 17 19">
<circle cx="8.5" cy="8" r="7.3" fill="#e0ecf8" stroke="#3060b0"/><path d="M6 16L8 18L10 15" fill="#3060b0"/><circle cx="8.5" cy="4.2" r="1.4" fill="#1040a0"/><path d="M8.5 7V13" stroke="#1040a0" stroke-width="2.4"/></svg>
<svg class="a" style="left:947px;top:746px" width="17" height="16" viewBox="0 0 17 16">
<rect x="0" y="0" width="17" height="16" fill="#0010d0"/><rect x="1" y="1" width="15" height="14" fill="none" stroke="#000060"/><path d="M5 3L13 8L5 13Z" fill="#fff"/></svg>
<svg class="a" style="left:966px;top:746px" width="15" height="15" viewBox="0 0 15 15">
<path d="M7 1L9 5.5L14 6L10 9L11.5 14L7 11L2.5 14L4 9L0.5 6L5 5.5Z" fill="#f8e040" stroke="#907000" stroke-width="0.8"/></svg>
<div class="a" style="left:986px;top:745px;height:17px;line-height:17px;font-size:12px"><span class="sx" style="transform:scaleX(0.97)">17:58</span></div>
</body></html>
